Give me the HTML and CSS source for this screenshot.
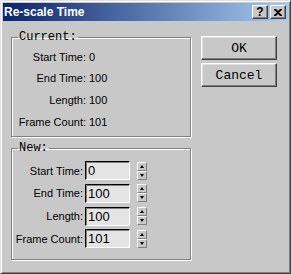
FILE: index.html
```html
<!DOCTYPE html>
<html lang="en">
<head>
  <meta charset="UTF-8">
  <title>Re-scale Time</title>
  <link rel="stylesheet" href="styles.css">
</head>
<body>
  <div class="window">
    <div class="titlebar">
      <span class="title">Re-scale Time</span>
      <div class="caption-buttons">
        <button class="cap-btn">?</button>
        <button class="cap-btn">
          <svg width="8" height="7" viewBox="0 0 8 7"><path d="M0 0h2l2 2 2-2h2v1L5 3.5 8 6v1H6L4 5 2 7H0V6l3-2.5L0 1z" fill="#000"/></svg>
        </button>
      </div>
    </div>

    <div class="content">
      <div class="groups">
        <fieldset class="group current">
          <legend>Current:</legend>
          <div class="rows">
            <span class="label">Start Time:</span><span class="value">0</span>
            <span class="label">End Time:</span><span class="value">100</span>
            <span class="label">Length:</span><span class="value">100</span>
            <span class="label">Frame Count:</span><span class="value">101</span>
          </div>
        </fieldset>

        <fieldset class="group new">
          <legend>New:</legend>
          <div class="rows">
            <span class="label">Start Time:</span>
            <div class="spin"><input type="text" value="0"><span class="spinner"><i class="up"></i><i class="down"></i></span></div>
            <span class="label">End Time:</span>
            <div class="spin"><input type="text" value="100"><span class="spinner"><i class="up"></i><i class="down"></i></span></div>
            <span class="label">Length:</span>
            <div class="spin"><input type="text" value="100"><span class="spinner"><i class="up"></i><i class="down"></i></span></div>
            <span class="label">Frame Count:</span>
            <div class="spin"><input type="text" value="101"><span class="spinner"><i class="up"></i><i class="down"></i></span></div>
          </div>
        </fieldset>
      </div>

      <div class="actions">
        <button class="btn">OK</button>
        <button class="btn">Cancel</button>
      </div>
    </div>
  </div>
</body>
</html>
```

FILE: styles.css
```css
html, body {
  margin: 0;
  padding: 0;
  background: #c8c8c8;
}
body {
  font-family: "Liberation Sans", Arial, sans-serif;
  font-size: 11px;
  color: #000;
}
.window {
  width: 291px;
  height: 274px;
  box-sizing: border-box;
  background: #c8c8c8;
  border: 1px solid;
  border-color: #e0e0e0 #404040 #404040 #e0e0e0;
  box-shadow: inset 1px 1px 0 #ffffff, inset -1px -1px 0 #808080;
  padding: 2px;
}
.titlebar {
  height: 18px;
  display: flex;
  align-items: center;
  justify-content: space-between;
  padding: 0 2px 0 1px;
  background: linear-gradient(to right, #0a246a, #a6caf0);
}
.title {
  color: #fff;
  font: bold 12px "Liberation Sans", Arial, sans-serif;
}
.caption-buttons {
  display: flex;
  gap: 2px;
}
.cap-btn {
  width: 16px;
  height: 14px;
  padding: 0;
  margin: 0;
  display: flex;
  align-items: center;
  justify-content: center;
  background: #c8c8c8;
  border: 1px solid;
  border-color: #fff #404040 #404040 #fff;
  box-shadow: inset -1px -1px 0 #808080;
  font: bold 12px "Liberation Sans", sans-serif;
  color: #000;
}
.content {
  display: flex;
  padding: 10px 8px 0 8px;
  gap: 10px;
}
.groups {
  display: flex;
  flex-direction: column;
  gap: 5px;
}
.group {
  width: 180px;
  box-sizing: border-box;
  margin: 0;
  padding: 0;
  border: 1px solid #808080;
  box-shadow: 1px 1px 0 #fff, inset 1px 1px 0 #fff;
}
.group legend {
  font-family: "Liberation Mono", "Courier New", monospace;
  font-size: 12px;
  padding: 0 1px;
  margin-left: 6px;
  line-height: 12px;
}
.rows {
  display: grid;
  align-items: center;
}
.current .rows {
  grid-template-columns: 74px auto;
  column-gap: 3px;
  grid-auto-rows: 21.6px;
  padding: 3px 0 4px 0;
}
.new .rows {
  grid-template-columns: 71px auto;
  column-gap: 2px;
  grid-auto-rows: 22.7px;
  padding: 5px 0 9px 0;
}
.label {
  text-align: right;
  white-space: nowrap;
}
.spin {
  display: flex;
  align-items: center;
  gap: 7px;
}
.spin input {
  width: 45px;
  height: 19px;
  box-sizing: border-box;
  margin: 0;
  padding: 0 2px;
  border: 1px solid;
  border-color: #000 #fff #fff #000;
  box-shadow: inset 1px 1px 0 #808080;
  background: #e4e4e4;
  font: 13px "Liberation Sans", Arial, sans-serif;
  color: #000;
}
.spinner {
  display: flex;
  flex-direction: column;
  width: 10px;
  height: 18px;
}
.spinner i {
  flex: 1;
  position: relative;
  border: 1px solid;
  border-color: #fff #808080 #808080 #fff;
}
.spinner i::after {
  content: "";
  position: absolute;
  left: 2px;
  border-left: 2px solid transparent;
  border-right: 2px solid transparent;
}
.spinner .up::after {
  top: 2px;
  border-bottom: 3px solid #000;
}
.spinner .down::after {
  top: 2px;
  border-top: 3px solid #000;
}
.actions {
  display: flex;
  flex-direction: column;
  gap: 3px;
  padding-top: 5px;
}
.btn {
  width: 76px;
  height: 24px;
  margin: 0;
  padding: 0;
  background: #c8c8c8;
  border: 1px solid;
  border-color: #fff #404040 #404040 #fff;
  box-shadow: inset -1px -1px 0 #808080, inset 1px 1px 0 #e0e0e0;
  font: 13px "Liberation Mono", "Courier New", monospace;
  color: #000;
}
```
